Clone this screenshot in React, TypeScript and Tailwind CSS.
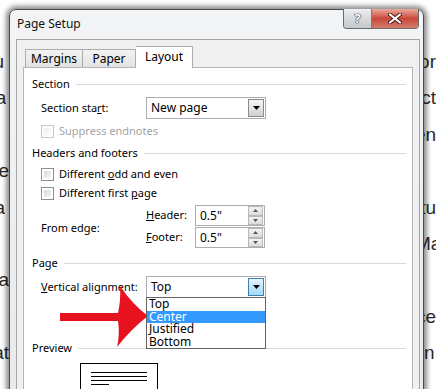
import React from 'react';

const bgLines: [string, string][] = [
  ['su', 'or'],
  ['na', 'ct'],
  ['la', 'en'],
  ['e', ''],
  ['a', 'tu'],
  ['la', 'Ma'],
  ['ea', ''],
  ['r.', 'ce'],
  ['at', 'n'],
];

const SectionHeader = ({ label, className = '' }: { label: string; className?: string }) => (
  <div className={`shrink-0 flex items-center h-[16px] pl-[8px] pr-[6px] gap-[6px] ${className}`}>
    <span>{label}</span>
    <div className="flex-1 h-px bg-[#d5dbe1]" />
  </div>
);

const Checkbox = ({ disabled = false }: { disabled?: boolean }) => (
  <div
    className={`w-[13px] h-[13px] border p-[2px] bg-white ${
      disabled ? 'border-[#c8c8c8]' : 'border-[#8e8f8f]'
    }`}
  >
    <div
      className={`w-full h-full bg-gradient-to-br ${
        disabled ? 'from-[#f0f0f0] to-[#fafafa]' : 'from-[#d6d8db] to-[#f7f7f7]'
      }`}
    />
  </div>
);

const ArrowButton = ({ hot = false }: { hot?: boolean }) => (
  <div
    className={`w-[16px] h-[18px] m-[1px] border flex items-center justify-center ${
      hot
        ? 'border-[#3c7fb1] bg-gradient-to-b from-[#eaf6fd] via-[#bee6fd] to-[#a7d9f5]'
        : 'border-[#8a8a8a] bg-gradient-to-b from-[#f6f6f6] via-[#e5e5e5] to-[#cfcfcf]'
    }`}
  >
    <svg width="7" height="4" viewBox="0 0 7 4">
      <path d="M0 0 L7 0 L3.5 4 Z" fill="#000" />
    </svg>
  </div>
);

const Dropdown = ({ value, hot = false }: { value: string; hot?: boolean }) => (
  <div className="w-[120px] h-[22px] border border-[#abadb3] bg-white flex items-center">
    <span className="flex-1 pl-[4px] text-[12px]">{value}</span>
    <ArrowButton hot={hot} />
  </div>
);

const Spinner = () => (
  <div className="flex flex-col w-[15px] h-[19px] mr-[1px]">
    {[0, 1].map((i) => (
      <div
        key={i}
        className="flex-1 border border-[#b8b8b8] bg-gradient-to-b from-[#f4f4f4] to-[#dcdcdc] flex items-center justify-center"
      >
        <svg width="5" height="3" viewBox="0 0 5 3">
          <path d={i === 0 ? 'M0 3 L5 3 L2.5 0 Z' : 'M0 0 L5 0 L2.5 3 Z'} fill="#555" />
        </svg>
      </div>
    ))}
  </div>
);

const SpinInput = ({ value }: { value: string }) => (
  <div className="w-[70px] h-[21px] border border-[#abadb3] bg-white flex items-center">
    <span className="flex-1 pl-[4px] text-[12px]">{value}</span>
    <Spinner />
  </div>
);

const App = () => {
  return (
    <div className="relative w-[436px] h-[389px] overflow-hidden bg-white">
      {/* document text behind the dialog */}
      <div className="pt-[44px] flex flex-col font-['Liberation_Sans',sans-serif] text-[19px] text-[#2a2a2a]">
        {bgLines.map(([l, r], i) => (
          <div key={i} className="h-[36.4px] flex items-center">
            <div className="w-[9px] overflow-hidden flex justify-end whitespace-nowrap">{l}</div>
            <div className="ml-[415px] whitespace-nowrap">{r}</div>
          </div>
        ))}
      </div>

      {/* dialog */}
      <div className="absolute left-[9px] top-[9px] w-[415px] rounded-t-[7px] border border-[#4a4a4a] bg-gradient-to-b from-[#f3f4f6] to-[#e6e8eb] shadow-[0_0_5px_3px_rgba(0,0,0,0.45)] flex flex-col font-['Noto_Sans',sans-serif] text-[11px] text-black">
        {/* title bar */}
        <div className="shrink-0 h-[29px] flex items-start justify-between">
          <span className="pl-[7px] pt-[5px] text-[12px] text-[#111]">Page Setup</span>
          <div className="flex mr-[4px] -mt-px rounded-b-[4px] overflow-hidden border border-t-0 border-[#6a6a6a]">
            <div className="w-[28px] h-[19px] bg-gradient-to-b from-[#eef0f2] via-[#d6dade] to-[#c3c8ce] border-r border-[#7d7d7d] flex items-center justify-center">
              <span className="text-[13px] font-bold text-white leading-none [text-shadow:0_0_1px_#333,0_0_1px_#333,0_0_1px_#333]">?</span>
            </div>
            <div className="w-[46px] h-[19px] bg-gradient-to-b from-[#e9a99c] via-[#c8473b] to-[#d47a6c] flex items-center justify-center">
              <svg width="14" height="11" viewBox="0 0 14 11">
                <path d="M2 1.5 L12 9.5 M12 1.5 L2 9.5" stroke="#4a1a14" strokeWidth="4" strokeLinecap="round" />
                <path d="M2 1.5 L12 9.5 M12 1.5 L2 9.5" stroke="#fff" strokeWidth="2.2" strokeLinecap="round" />
              </svg>
            </div>
          </div>
        </div>

        {/* client area */}
        <div className="shrink-0 ml-[6px] mr-[3px] border border-[#a5a5a5] bg-[#f0f0f0] px-[6px] flex flex-col">
          {/* tabs */}
          <div className="shrink-0 h-[27px] flex items-end pl-[2px] relative z-10">
            <div className="w-[58px] h-[18px] border border-b-0 border-[#acacac] bg-gradient-to-b from-[#f2f2f2] to-[#e3e3e3] flex items-center justify-center text-[12px]">
              Margins
            </div>
            <div className="w-[53px] h-[18px] border border-l-0 border-b-0 border-[#acacac] bg-gradient-to-b from-[#f2f2f2] to-[#e3e3e3] flex items-center justify-center text-[12px]">
              Paper
            </div>
            <div className="w-[57px] h-[22px] -mb-px border border-b-0 border-l-0 border-[#acacac] bg-white flex items-center justify-center text-[12px] pb-[2px]">
              Layout
            </div>
          </div>

          {/* tab panel */}
          <div className="shrink-0 border border-[#b5b5b5] bg-white flex flex-col pb-[20px]">
            <SectionHeader label="Section" className="mt-[8px]" />

            <div className="mt-[5px] h-[22px] flex items-center pl-[17px]">
              <span className="w-[105px]">
                Section sta<u>r</u>t:
              </span>
              <Dropdown value="New page" />
            </div>

            <div className="mt-[4px] h-[16px] flex items-center pl-[17px] gap-[5px] text-[#a3a3a3]">
              <Checkbox disabled />
              <span>Suppress endnotes</span>
            </div>

            <SectionHeader label="Headers and footers" className="mt-[6px]" />

            <div className="mt-[5px] h-[16px] flex items-center pl-[17px] gap-[5px]">
              <Checkbox />
              <span>
                Different <u>o</u>dd and even
              </span>
            </div>

            <div className="mt-[3px] h-[16px] flex items-center pl-[17px] gap-[5px]">
              <Checkbox />
              <span>
                Different first <u>p</u>age
              </span>
            </div>

            <div className="mt-[4px] flex items-center pl-[17px]">
              <span className="w-[105px] pt-[3px]">From edge:</span>
              <div className="flex flex-col gap-[1px]">
                <div className="flex items-center h-[21px]">
                  <span className="w-[49px]">
                    <u>H</u>eader:
                  </span>
                  <SpinInput value={'0.5"'} />
                </div>
                <div className="flex items-center h-[21px]">
                  <span className="w-[49px]">
                    <u>F</u>ooter:
                  </span>
                  <SpinInput value={'0.5"'} />
                </div>
              </div>
            </div>

            <SectionHeader label="Page" className="mt-[7px]" />

            <div className="mt-[5px] h-[22px] flex items-center pl-[17px]">
              <span className="w-[105px]">
                <u>V</u>ertical alignment:
              </span>
              <div className="relative">
                <Dropdown value="Top" hot />
                {/* open list */}
                <div className="absolute left-0 top-[21px] w-[120px] border border-[#646464] bg-white z-20 text-[12px] leading-[12.5px]">
                  <div className="h-[12.5px] pl-[2px]">Top</div>
                  <div className="h-[12.5px] pl-[2px] bg-[#3399ff] text-white">Center</div>
                  <div className="h-[12.5px] pl-[2px]">Justified</div>
                  <div className="h-[12.5px] pl-[2px]">Bottom</div>
                </div>
              </div>
            </div>

            <SectionHeader label="Preview" className="mt-[42px]" />

            <div className="mt-[7px] ml-[56px] w-[78px] h-[60px] border border-black bg-white pt-[8px] pl-[10px] flex flex-col gap-[3px]">
              <div className="w-[56px] h-px bg-black" />
              <div className="w-[56px] h-px bg-black" />
              <div className="w-[56px] h-px bg-black" />
              <div className="w-[18px] h-px bg-black" />
            </div>
          </div>
        </div>
      </div>

      {/* red arrow annotation + mouse pointer */}
      <svg className="absolute inset-0 pointer-events-none" width="436" height="389" viewBox="0 0 436 389">
        <path
          d="M60 313 L118 313 Q121 300 120 286 Q132 304 148 316 Q131 329 117 347 Q120 334 118 321 L60 321 Z"
          fill="#e8121f"
        />
        <path
          d="M229.5 318.5 L229.5 334.5 L233.3 330.8 L236.3 337.2 L238.6 336.2 L235.7 329.9 L240.8 329.9 Z"
          fill="#fff"
          stroke="#000"
          strokeWidth="1"
          strokeLinejoin="round"
        />
      </svg>
    </div>
  );
};

export default App;
